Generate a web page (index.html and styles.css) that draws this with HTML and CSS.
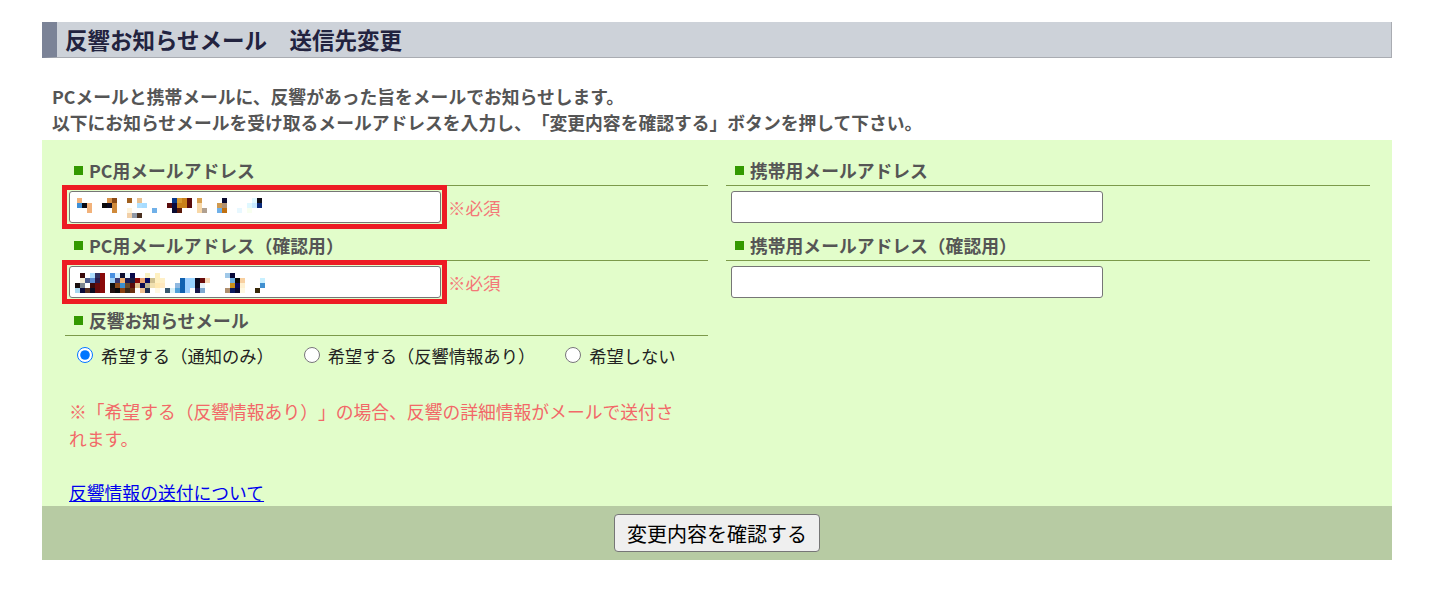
FILE: index.html
```html
<!DOCTYPE html>
<html lang="ja">
<head>
    <meta charset="UTF-8">
    <meta name="viewport" content="width=device-width, initial-scale=1.0">
    <title>反響お知らせメール 送信先変更</title>
    <link rel="stylesheet" href="styles.css">
</head>
<body>
    <div class="page">
        <h2 class="page-title">反響お知らせメール　送信先変更</h2>
        <p class="lead">
            PCメールと携帯メールに、反響があった旨をメールでお知らせします。<br>
            以下にお知らせメールを受け取るメールアドレスを入力し、「変更内容を確認する」ボタンを押して下さい。
        </p>

        <form class="mail-form" onsubmit="return false;">
            <div class="form-body">
                <!-- PC -->
                <div class="form-col">
                    <div class="field-label">PC用メールアドレス</div>
                    <div class="field-row">
                        <span class="masked">
                            <input type="text" class="text-input" name="pc_mail">
                            <!-- address hidden behind a mosaic -->
                            <svg class="mosaic" width="185" height="20" viewBox="0 0 37 4" shape-rendering="crispEdges">
                                <rect x="0" y="0" width="1" height="1" fill="#f2b27a"/>
                                <rect x="0" y="1" width="1" height="1" fill="#3d8fd6"/>
                                <rect x="1" y="1" width="1" height="1" fill="#0b0b14"/>
                                <rect x="2" y="1" width="1" height="2" fill="#f2b27a"/>
                                <rect x="5" y="1" width="1" height="1" fill="#0a0a0a"/>
                                <rect x="6" y="0" width="1" height="1" fill="#d8924a"/>
                                <rect x="6" y="1" width="1" height="1" fill="#0c0c20"/>
                                <rect x="7" y="0" width="1" height="1" fill="#8a4a14"/>
                                <rect x="7" y="1" width="1" height="2" fill="#d08a3a"/>
                                <rect x="10" y="0" width="1" height="1" fill="#a0601e"/>
                                <rect x="10" y="2" width="1" height="1" fill="#fff4dc"/>
                                <rect x="10" y="3" width="1" height="1" fill="#f2d0a8"/>
                                <rect x="11" y="3" width="1" height="1" fill="#8f98a6"/>
                                <rect x="12" y="0" width="1" height="1" fill="#e8c090"/>
                                <rect x="12" y="1" width="1" height="1" fill="#b0e0ff"/>
                                <rect x="12" y="3" width="1" height="1" fill="#4a3020"/>
                                <rect x="13" y="1" width="1" height="1" fill="#a8dcff"/>
                                <rect x="15" y="2" width="1" height="1" fill="#70b0e8"/>
                                <rect x="18" y="1" width="1" height="1" fill="#5a0c0c"/>
                                <rect x="19" y="0" width="1" height="1" fill="#0a3a8a"/>
                                <rect x="19" y="1" width="1" height="1" fill="#0a0a40"/>
                                <rect x="19" y="2" width="1" height="1" fill="#0a0a30"/>
                                <rect x="20" y="0" width="1" height="1" fill="#d89a30"/>
                                <rect x="20" y="1" width="1" height="1" fill="#c8801a"/>
                                <rect x="20" y="2" width="1" height="1" fill="#5a1a0a"/>
                                <rect x="21" y="0" width="1" height="2" fill="#c8801a"/>
                                <rect x="22" y="0" width="1" height="2" fill="#5a0c0c"/>
                                <rect x="24" y="0" width="1" height="1" fill="#d8a050"/>
                                <rect x="24" y="1" width="1" height="2" fill="#f8d8a8"/>
                                <rect x="25" y="2" width="1" height="1" fill="#b0a090"/>
                                <rect x="28" y="1" width="1" height="1" fill="#d09a50"/>
                                <rect x="28" y="2" width="1" height="1" fill="#70b0e8"/>
                                <rect x="29" y="0" width="1" height="1" fill="#0a0a30"/>
                                <rect x="29" y="1" width="1" height="1" fill="#b09070"/>
                                <rect x="29" y="2" width="1" height="1" fill="#c07010"/>
                                <rect x="32" y="2" width="1" height="1" fill="#e8f8ff"/>
                                <rect x="34" y="1" width="1" height="1" fill="#e0f8ff"/>
                                <rect x="34" y="2" width="1" height="1" fill="#f8fff0"/>
                                <rect x="35" y="0" width="1" height="1" fill="#e0f8ff"/>
                                <rect x="35" y="1" width="1" height="1" fill="#c8eaff"/>
                                <rect x="36" y="0" width="1" height="1" fill="#101018"/>
                                <rect x="36" y="1" width="1" height="1" fill="#0a2a7a"/>
                            </svg>
                        </span>
                        <span class="required">※必須</span>
                    </div>

                    <div class="field-label">PC用メールアドレス（確認用）</div>
                    <div class="field-row">
                        <span class="masked">
                            <input type="text" class="text-input" name="pc_mail_confirm">
                            <svg class="mosaic second" width="190" height="20" viewBox="0 0 38 4" shape-rendering="crispEdges">
                                <rect x="0" y="2" width="1" height="1" fill="#1a1010"/>
                                <rect x="0" y="3" width="1" height="1" fill="#a8d8f0"/>
                                <rect x="1" y="0" width="1" height="1" fill="#3a0a0a"/>
                                <rect x="1" y="1" width="1" height="1" fill="#f8f0d8"/>
                                <rect x="1" y="2" width="1" height="1" fill="#808890"/>
                                <rect x="1" y="3" width="1" height="1" fill="#0a0a3a"/>
                                <rect x="2" y="1" width="1" height="1" fill="#4a5a8a"/>
                                <rect x="2" y="3" width="1" height="1" fill="#5a3020"/>
                                <rect x="3" y="0" width="1" height="1" fill="#b0e0ff"/>
                                <rect x="3" y="1" width="1" height="1" fill="#5a8ad0"/>
                                <rect x="3" y="2" width="1" height="1" fill="#3a0a0a"/>
                                <rect x="3" y="3" width="1" height="1" fill="#0a0a20"/>
                                <rect x="4" y="0" width="1" height="1" fill="#303060"/>
                                <rect x="4" y="1" width="1" height="1" fill="#2a1a4a"/>
                                <rect x="4" y="2" width="1" height="2" fill="#6a0a0a"/>
                                <rect x="5" y="0" width="1" height="4" fill="#8a0a0a"/>
                                <rect x="7" y="0" width="1" height="1" fill="#4a90e0"/>
                                <rect x="7" y="1" width="1" height="1" fill="#a0d0f8"/>
                                <rect x="7" y="2" width="1" height="1" fill="#101010"/>
                                <rect x="7" y="3" width="1" height="1" fill="#201010"/>
                                <rect x="8" y="0" width="1" height="1" fill="#d8f0ff"/>
                                <rect x="8" y="1" width="1" height="1" fill="#3a3a70"/>
                                <rect x="8" y="2" width="1" height="1" fill="#8a4a1a"/>
                                <rect x="8" y="3" width="1" height="1" fill="#0a0a0a"/>
                                <rect x="9" y="0" width="1" height="1" fill="#101030"/>
                                <rect x="9" y="1" width="1" height="1" fill="#f0b070"/>
                                <rect x="9" y="2" width="1" height="1" fill="#3a90d0"/>
                                <rect x="9" y="3" width="1" height="1" fill="#8a4010"/>
                                <rect x="10" y="0" width="1" height="1" fill="#e8f8ff"/>
                                <rect x="10" y="1" width="1" height="1" fill="#1a1a50"/>
                                <rect x="10" y="2" width="1" height="1" fill="#6a4a2a"/>
                                <rect x="10" y="3" width="1" height="1" fill="#3a2a1a"/>
                                <rect x="11" y="0" width="1" height="1" fill="#0a0a4a"/>
                                <rect x="11" y="1" width="1" height="1" fill="#1a1a40"/>
                                <rect x="11" y="2" width="1" height="1" fill="#5a0a0a"/>
                                <rect x="11" y="3" width="1" height="1" fill="#6a3010"/>
                                <rect x="12" y="1" width="1" height="1" fill="#8a0a0a"/>
                                <rect x="12" y="2" width="1" height="1" fill="#e0c090"/>
                                <rect x="13" y="1" width="1" height="1" fill="#e8a070"/>
                                <rect x="13" y="2" width="1" height="1" fill="#0a0a50"/>
                                <rect x="13" y="3" width="1" height="1" fill="#f0c090"/>
                                <rect x="14" y="0" width="1" height="1" fill="#f8f0c0"/>
                                <rect x="14" y="1" width="1" height="1" fill="#0a0a60"/>
                                <rect x="14" y="2" width="1" height="1" fill="#b8b090"/>
                                <rect x="14" y="3" width="1" height="1" fill="#203050"/>
                                <rect x="15" y="1" width="1" height="1" fill="#d0c090"/>
                                <rect x="15" y="2" width="1" height="1" fill="#f0e0b0"/>
                                <rect x="16" y="0" width="1" height="2" fill="#fff0c0"/>
                                <rect x="16" y="2" width="1" height="1" fill="#ffe8b0"/>
                                <rect x="16" y="3" width="1" height="1" fill="#fff8e0"/>
                                <rect x="17" y="1" width="1" height="1" fill="#fff0c8"/>
                                <rect x="17" y="2" width="1" height="1" fill="#ffe8c0"/>
                                <rect x="18" y="3" width="1" height="1" fill="#3a5a70"/>
                                <rect x="19" y="3" width="1" height="1" fill="#d8f0f8"/>
                                <rect x="20" y="2" width="1" height="1" fill="#90b8e0"/>
                                <rect x="20" y="3" width="1" height="1" fill="#50a0d8"/>
                                <rect x="21" y="1" width="1" height="3" fill="#1060b0"/>
                                <rect x="22" y="1" width="1" height="3" fill="#a0d0ff"/>
                                <rect x="23" y="1" width="1" height="2" fill="#98d4ff"/>
                                <rect x="24" y="1" width="1" height="2" fill="#0a0a20"/>
                                <rect x="24" y="3" width="1" height="1" fill="#1a1a4a"/>
                                <rect x="25" y="1" width="1" height="1" fill="#6a0a0a"/>
                                <rect x="25" y="2" width="1" height="1" fill="#e8f0f8"/>
                                <rect x="25" y="3" width="1" height="1" fill="#80a8d0"/>
                                <rect x="26" y="1" width="1" height="1" fill="#f8d8b8"/>
                                <rect x="30" y="0" width="1" height="1" fill="#a0c8e8"/>
                                <rect x="30" y="3" width="1" height="1" fill="#b09070"/>
                                <rect x="31" y="0" width="1" height="1" fill="#0a0a3a"/>
                                <rect x="31" y="1" width="1" height="1" fill="#70b0e0"/>
                                <rect x="31" y="2" width="1" height="1" fill="#c8901a"/>
                                <rect x="31" y="3" width="1" height="1" fill="#0a1a60"/>
                                <rect x="32" y="1" width="1" height="1" fill="#0a0a0a"/>
                                <rect x="32" y="2" width="1" height="1" fill="#0a0a5a"/>
                                <rect x="32" y="3" width="1" height="1" fill="#0a0a30"/>
                                <rect x="33" y="1" width="1" height="1" fill="#f8d0a0"/>
                                <rect x="33" y="2" width="1" height="1" fill="#fff0d0"/>
                                <rect x="33" y="3" width="1" height="1" fill="#fff8e0"/>
                                <rect x="36" y="3" width="1" height="1" fill="#3a2a0a"/>
                                <rect x="37" y="1" width="1" height="1" fill="#c8f0ff"/>
                                <rect x="37" y="2" width="1" height="1" fill="#4090d0"/>
                            </svg>
                        </span>
                        <span class="required">※必須</span>
                    </div>

                    <div class="field-label">反響お知らせメール</div>
                    <div class="radio-row">
                        <label class="radio-item"><input type="radio" name="notice" value="1" checked>希望する（通知のみ）</label>
                        <label class="radio-item"><input type="radio" name="notice" value="2">希望する（反響情報あり）</label>
                        <label class="radio-item"><input type="radio" name="notice" value="0">希望しない</label>
                    </div>

                    <p class="note">※「希望する（反響情報あり）」の場合、反響の詳細情報がメールで送付されます。</p>
                    <a href="#" class="help-link">反響情報の送付について</a>
                </div>

                <!-- 携帯 -->
                <div class="form-col mobile">
                    <div class="field-label">携帯用メールアドレス</div>
                    <div class="field-row">
                        <input type="text" class="text-input" name="mobile_mail">
                    </div>

                    <div class="field-label">携帯用メールアドレス（確認用）</div>
                    <div class="field-row">
                        <input type="text" class="text-input" name="mobile_mail_confirm">
                    </div>
                </div>
            </div>

            <div class="form-foot">
                <button type="button" class="confirm-btn">変更内容を確認する</button>
            </div>
        </form>
    </div>
</body>
</html>
```

FILE: styles.css
```css
* {
    box-sizing: border-box;
}

body {
    margin: 0;
    padding-top: 22px;
    font-family: "Noto Sans CJK JP", "Noto Sans", sans-serif;
    font-size: 17.8px;
    color: #555;
    background-color: #fff;
    text-spacing-trim: space-all;
}

.page {
    width: 1350px;
    margin-left: 42px;
}

/* 見出し */
.page-title {
    margin: 0;
    height: 36px;
    padding-left: 8px;
    font-size: 22.5px;
    font-weight: bold;
    line-height: 35px;
    color: #22233f;
    background-color: #cdd2d9;
    border-left: 15px solid #7b8397;
    border-right: 1px solid #a9acb2;
    border-bottom: 1px solid #a9acb2;
}

.lead {
    margin: 25px 0 5px 10px;
    font-weight: bold;
    line-height: 26px;
    color: #555;
}

/* フォーム本体 */
.form-body {
    display: grid;
    grid-template-columns: 643px 644px;
    column-gap: 18px;
    padding: 15px 22px 0 23px;
    background-color: #e2fdca;
}

.form-col {
    display: flex;
    flex-direction: column;
    align-items: flex-start;
}

.field-label {
    align-self: stretch;
    display: flex;
    align-items: center;
    padding: 3px 0 2px 9px;
    font-weight: bold;
    line-height: 25px;
    color: #555;
    border-bottom: 1px solid #7c9a4a;
}

.field-label::before {
    content: "";
    width: 9px;
    height: 9px;
    margin-right: 6px;
    background-color: #339900;
}

.field-row {
    display: flex;
    align-items: center;
    gap: 7px;
    margin: 5px 0 7px 4px;
}

.mobile .field-row {
    margin-left: 5px;
}

.text-input {
    width: 372px;
    height: 32px;
    margin: 0;
    padding: 2px 6px;
    font-family: inherit;
    font-size: 16px;
    background-color: #fff;
    border: 1px solid #767676;
    border-radius: 3px;
}

/* 入力済みアドレス：モザイク＋赤枠 */
.masked {
    position: relative;
    display: block;
}

.masked::after {
    content: "";
    position: absolute;
    top: -6px;
    right: -6px;
    bottom: -6px;
    left: -7px;
    border: 5px solid #ed1c24;
    pointer-events: none;
}

.mosaic {
    position: absolute;
    left: 8px;
    top: 7px;
}

.mosaic.second {
    left: 6px;
}

.required {
    font-size: 17.5px;
    color: #f47777;
}

/* ラジオボタン */
.radio-row {
    display: flex;
    align-items: center;
    gap: 24px;
    margin-top: 5px;
    padding-left: 6px;
    line-height: 30px;
}

.radio-item {
    display: flex;
    align-items: center;
    font-size: 17.3px;
    color: #222;
}

.radio-item input {
    width: 16px;
    height: 16px;
    margin: 0 8px 2px 6px;
}

.note {
    width: 615px;
    margin: 27px 0 0 4px;
    line-height: 27px;
    color: #f26868;
}

.help-link {
    margin: 27px 0 0 4px;
    line-height: 27px;
    color: #0000ee;
}

/* 確認ボタン */
.form-foot {
    display: flex;
    justify-content: center;
    align-items: center;
    height: 54px;
    background-color: #b7cba3;
}

.confirm-btn {
    height: 38px;
    padding: 0 12px;
    font-family: inherit;
    font-size: 20px;
    color: #000;
    background-color: #efefef;
    border: 1px solid #767676;
    border-radius: 4px;
    cursor: pointer;
}
```
